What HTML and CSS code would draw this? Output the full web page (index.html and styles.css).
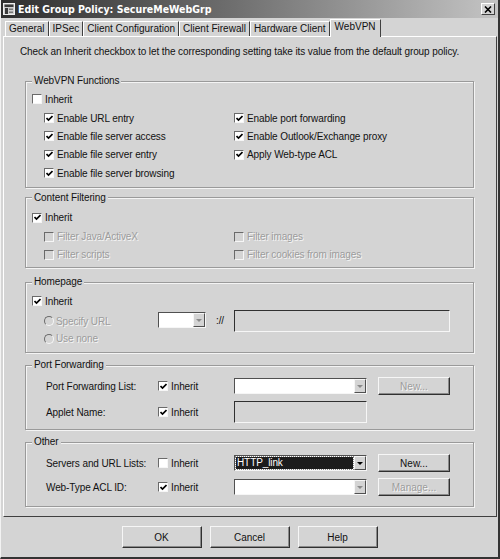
FILE: index.html
```html
<!DOCTYPE html>
<html lang="en">
<head>
    <meta charset="UTF-8">
    <title>Edit Group Policy: SecureMeWebGrp</title>
    <link rel="stylesheet" href="styles.css">
</head>
<body>
<div class="window">
    <div class="titlebar">
        <svg class="app-icon" width="12" height="12" viewBox="0 0 12 12">
            <rect x="0.5" y="0.5" width="11" height="11" fill="#cfcfcf" stroke="#eee"/>
            <rect x="1.5" y="1.5" width="9" height="2.5" fill="#3a3a3a"/>
            <rect x="2" y="5" width="3" height="6" fill="#3a3a3a"/>
            <rect x="6" y="5.5" width="4" height="1.5" fill="#777"/>
            <rect x="6" y="8.5" width="4" height="1.5" fill="#777"/>
        </svg>
        <span class="title">Edit Group Policy: SecureMeWebGrp</span>
        <span class="close">
            <svg width="8" height="7" viewBox="0 0 8 7"><path d="M1 0.5l6 6M7 0.5l-6 6" stroke="#000" stroke-width="1.6"/></svg>
        </span>
    </div>

    <div class="tabs">
        <span class="tab">General</span>
        <span class="tab">IPSec</span>
        <span class="tab">Client Configuration</span>
        <span class="tab">Client Firewall</span>
        <span class="tab">Hardware Client</span>
        <span class="tab active">WebVPN</span>
    </div>

    <div class="panel">
        <p class="hint">Check an Inherit checkbox to let the corresponding setting take its value from the default group policy.</p>

        <!-- WebVPN Functions -->
        <fieldset class="group">
            <legend>WebVPN Functions</legend>
            <span class="check inherit"><span class="cb"></span>Inherit</span>
            <div class="options">
                <span class="check"><span class="cb"><svg class="tick" viewBox="0 0 7 7"><path d="M0.5 3l2 2 4-4"/></svg></span>Enable URL entry</span>
                <span class="check"><span class="cb"><svg class="tick" viewBox="0 0 7 7"><path d="M0.5 3l2 2 4-4"/></svg></span>Enable port forwarding</span>
                <span class="check"><span class="cb"><svg class="tick" viewBox="0 0 7 7"><path d="M0.5 3l2 2 4-4"/></svg></span>Enable file server access</span>
                <span class="check"><span class="cb"><svg class="tick" viewBox="0 0 7 7"><path d="M0.5 3l2 2 4-4"/></svg></span>Enable Outlook/Exchange proxy</span>
                <span class="check"><span class="cb"><svg class="tick" viewBox="0 0 7 7"><path d="M0.5 3l2 2 4-4"/></svg></span>Enable file server entry</span>
                <span class="check"><span class="cb"><svg class="tick" viewBox="0 0 7 7"><path d="M0.5 3l2 2 4-4"/></svg></span>Apply Web-type ACL</span>
                <span class="check"><span class="cb"><svg class="tick" viewBox="0 0 7 7"><path d="M0.5 3l2 2 4-4"/></svg></span>Enable file server browsing</span>
            </div>
        </fieldset>

        <!-- Content Filtering -->
        <fieldset class="group filtering">
            <legend>Content Filtering</legend>
            <span class="check inherit"><span class="cb"><svg class="tick" viewBox="0 0 7 7"><path d="M0.5 3l2 2 4-4"/></svg></span>Inherit</span>
            <div class="options">
                <span class="check disabled"><span class="cb"></span>Filter Java/ActiveX</span>
                <span class="check disabled"><span class="cb"></span>Filter images</span>
                <span class="check disabled"><span class="cb"></span>Filter scripts</span>
                <span class="check disabled"><span class="cb"></span>Filter cookies from images</span>
            </div>
        </fieldset>

        <!-- Homepage -->
        <fieldset class="group homepage">
            <legend>Homepage</legend>
            <span class="check inherit"><span class="cb"><svg class="tick" viewBox="0 0 7 7"><path d="M0.5 3l2 2 4-4"/></svg></span>Inherit</span>
            <div class="url-row">
                <div class="radios">
                    <span class="check disabled"><span class="radio"></span>Specify URL</span>
                    <span class="check disabled"><span class="radio"></span>Use none</span>
                </div>
                <span class="select small"><span class="select-value"></span><span class="select-arrow off"></span></span>
                <span class="scheme">://</span>
                <span class="textbox wide"></span>
            </div>
        </fieldset>

        <!-- Port Forwarding -->
        <fieldset class="group">
            <legend>Port Forwarding</legend>
            <div class="fields">
                <span class="field-label">Port Forwarding List:</span>
                <span class="check"><span class="cb"><svg class="tick" viewBox="0 0 7 7"><path d="M0.5 3l2 2 4-4"/></svg></span>Inherit</span>
                <span class="select"><span class="select-value"></span><span class="select-arrow off"></span></span>
                <button class="btn" disabled>New...</button>

                <span class="field-label">Applet Name:</span>
                <span class="check"><span class="cb"><svg class="tick" viewBox="0 0 7 7"><path d="M0.5 3l2 2 4-4"/></svg></span>Inherit</span>
                <span class="textbox"></span>
            </div>
        </fieldset>

        <!-- Other -->
        <fieldset class="group other">
            <legend>Other</legend>
            <div class="fields">
                <span class="field-label">Servers and URL Lists:</span>
                <span class="check"><span class="cb"></span>Inherit</span>
                <span class="select"><span class="select-value picked">HTTP_link</span><span class="select-arrow"></span></span>
                <button class="btn">New...</button>

                <span class="field-label">Web-Type ACL ID:</span>
                <span class="check"><span class="cb"><svg class="tick" viewBox="0 0 7 7"><path d="M0.5 3l2 2 4-4"/></svg></span>Inherit</span>
                <span class="select"><span class="select-value"></span><span class="select-arrow off"></span></span>
                <button class="btn" disabled>Manage...</button>
            </div>
        </fieldset>
    </div>

    <div class="actions">
        <button class="btn big">OK</button>
        <button class="btn big">Cancel</button>
        <button class="btn big">Help</button>
    </div>
</div>
</body>
</html>
```

FILE: styles.css
```css
body {
    margin: 0;
    font-family: 'Liberation Sans', Arial, sans-serif;
    font-size: 10px;
    letter-spacing: -0.1px;
    color: #111;
    background-color: #d4d4d4;
}

.window {
    width: 500px;
    height: 559px;
    box-sizing: border-box;
    border-left: 1px solid #f2f2f2;
    border-right: 2px solid #333;
    border-bottom: 2px solid #333;
    background-color: #d4d4d4;
}

/* title bar */
.titlebar {
    height: 18px;
    display: flex;
    align-items: center;
    padding: 0 3px 0 2px;
    background: linear-gradient(to right, #2e2e2e, #6c6c6c 45%, #c4c4c4);
    color: #fff;
}

.app-icon {
    margin-right: 3px;
}

.title {
    flex: 1;
    font-family: 'Liberation Sans Narrow', 'DejaVu Sans Condensed', 'Liberation Sans', sans-serif;
    font-weight: bold;
    font-size: 10.5px;
    letter-spacing: 0;
}

.close {
    width: 12px;
    height: 10px;
    display: flex;
    align-items: center;
    justify-content: center;
    background-color: #d4d4d4;
    border: 1px solid;
    border-color: #fff #404040 #404040 #fff;
}

/* tabs */
.tabs {
    display: flex;
    align-items: flex-end;
    height: 18px;
    padding-left: 4px;
    letter-spacing: 0;
}

.tab {
    height: 15px;
    line-height: 14px;
    padding: 0 3px;
    box-sizing: border-box;
    border-top: 1px solid #fff;
    border-left: 1px solid #fff;
    border-right: 1px solid #404040;
}

.tab.active {
    position: relative;
    height: 18px;
    line-height: 14px;
    padding: 0 4px;
    margin-bottom: -1px;
    background-color: #d4d4d4;
}

/* page */
.panel {
    height: 481px;
    box-sizing: border-box;
    margin: 0 1px 0 2px;
    border: 1px solid;
    border-color: #fff #404040 #404040 #fff;
}

.hint {
    margin: 9px 0 17px 16px;
    line-height: 12px;
    white-space: nowrap;
}

.group {
    margin: 0 22px 0 21px;
    padding: 0 0 4px 6px;
    min-width: 0;
    border: 1px solid #9a9a9a;
    box-shadow: inset 1px 1px 0 #f4f4f4, 1px 1px 0 #f4f4f4;
}

.group + .group {
    margin-top: 6px;
}

.group legend {
    padding: 0 2px;
    line-height: 12px;
    background-color: #d4d4d4;
}

.check {
    display: flex;
    align-items: center;
    height: 18px;
    white-space: nowrap;
}

.inherit {
    margin-top: 3px;
}

.cb {
    width: 10px;
    height: 10px;
    margin-right: 3px;
    box-sizing: border-box;
    display: flex;
    align-items: center;
    justify-content: center;
    background-color: #fff;
    border: 1px solid;
    border-color: #6a6a6a #f6f6f6 #f6f6f6 #6a6a6a;
}

.tick {
    width: 7px;
    height: 7px;
    fill: none;
    stroke: #000;
    stroke-width: 1.7;
}

.radio {
    width: 10px;
    height: 10px;
    margin-right: 2px;
    box-sizing: border-box;
    border-radius: 50%;
    background-color: #d4d4d4;
    border: 1px solid;
    border-color: #6a6a6a #f6f6f6 #f6f6f6 #6a6a6a;
}

.disabled {
    color: #9c9c9c;
    text-shadow: 1px 1px 0 #f6f6f6;
}

.disabled .cb {
    background-color: #d4d4d4;
}

.options {
    display: grid;
    grid-template-columns: 190px 1fr;
    grid-auto-rows: 18.4px;
    margin: 1px 0 0 12px;
}

.group.filtering {
    margin-top: 4px;
    padding-bottom: 3px;
}

.filtering .inherit {
    margin-top: 5px;
}

.group.homepage {
    margin-top: 8px;
    padding-bottom: 5px;
}

.homepage .inherit {
    margin-top: 4px;
}

/* homepage url row */
.url-row {
    display: flex;
    align-items: flex-start;
    margin-left: 12px;
}

.radios {
    width: 114px;
    padding-top: 2px;
}

.radios .check {
    height: 17.5px;
}

.scheme {
    width: 28px;
    line-height: 22px;
    text-align: center;
}

/* label / inherit / control / button rows */
.fields {
    display: grid;
    grid-template-columns: 112px 76px 144px 72px;
    grid-template-rows: 18px 22px;
    row-gap: 6px;
    align-items: center;
    margin: 6px 0 2px 14px;
}

.other .fields {
    grid-template-rows: 18px 18px;
    margin-bottom: 6px;
}

.select {
    width: 133px;
    height: 16px;
    box-sizing: border-box;
    display: flex;
    background-color: #fff;
    border: 1px solid;
    border-color: #505050 #f6f6f6 #f6f6f6 #505050;
}

.select.small {
    width: 48px;
    margin-top: 2px;
}

.select-value {
    flex: 1;
    margin: 1px;
    line-height: 12px;
    padding-left: 1px;
}

.select-value.picked {
    background-color: #1c1c1c;
    color: #fff;
    outline: 1px dotted #888;
}

.select-arrow {
    width: 12px;
    box-sizing: border-box;
    display: flex;
    align-items: center;
    justify-content: center;
    background-color: #d4d4d4;
    border: 1px solid;
    border-color: #f6f6f6 #505050 #505050 #f6f6f6;
}

.select-arrow::after {
    content: "";
    border-left: 3px solid transparent;
    border-right: 3px solid transparent;
    border-top: 3px solid #000;
}

.select-arrow.off::after {
    border-top-color: #8a8a8a;
}

.textbox {
    width: 133px;
    height: 22px;
    box-sizing: border-box;
    border: 1px solid;
    border-color: #303030 #f6f6f6 #f6f6f6 #303030;
}

.textbox.wide {
    width: 216px;
}

/* buttons */
.btn {
    width: 72px;
    height: 18px;
    padding: 0;
    font: inherit;
    color: #111;
    background-color: #d4d4d4;
    border: 1px solid;
    border-color: #f6f6f6 #303030 #303030 #f6f6f6;
    box-shadow: inset -1px -1px 0 #8a8a8a;
}

.btn:disabled {
    color: #9c9c9c;
    text-shadow: 1px 1px 0 #f6f6f6;
}

.btn.big {
    width: 80px;
    height: 22px;
}

.actions {
    display: flex;
    justify-content: center;
    gap: 8px;
    padding-top: 9px;
}
```
